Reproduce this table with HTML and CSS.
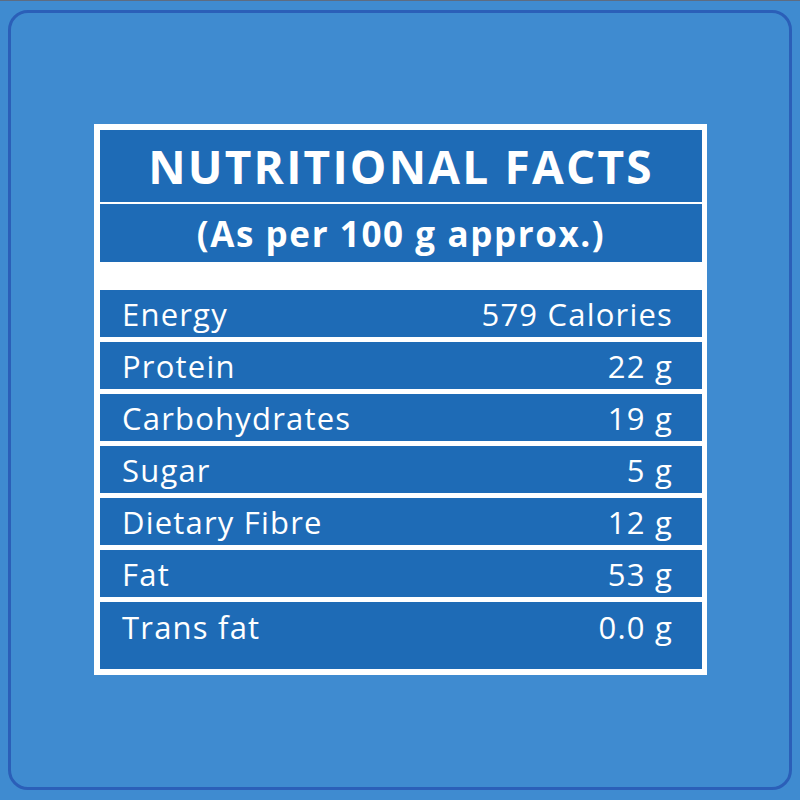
FILE: index.html
```html
<!DOCTYPE html>
<html>
<head>
<meta charset="utf-8">
<link rel="stylesheet" href="styles.css">
</head>
<body>
<div class="page">
  <div class="frame">
    <div class="label">
      <div class="head">
        <div class="title">NUTRITIONAL FACTS</div>
        <div class="subtitle">(As per 100 g approx.)</div>
      </div>
      <div class="rows">
        <div class="row"><span>Energy</span><span>579 Calories</span></div>
        <div class="row"><span>Protein</span><span>22 g</span></div>
        <div class="row"><span>Carbohydrates</span><span>19 g</span></div>
        <div class="row"><span>Sugar</span><span>5 g</span></div>
        <div class="row"><span>Dietary Fibre</span><span>12 g</span></div>
        <div class="row"><span>Fat</span><span>53 g</span></div>
        <div class="row last"><span>Trans fat</span><span>0.0 g</span></div>
      </div>
    </div>
  </div>
</div>
</body>
</html>
```

FILE: styles.css
```css
html, body {
  margin: 0;
  padding: 0;
}
body {
  width: 800px;
  height: 800px;
  font-family: "Open Sans", "Noto Sans", sans-serif;
}
.page {
  width: 800px;
  height: 800px;
  box-sizing: border-box;
  background: #3f8bd0;
  border-top: 1px solid #5d6c82;
  padding: 9px 8px 10px 8px;
}
.frame {
  height: 100%;
  box-sizing: border-box;
  border: 3px solid #2b5fb8;
  border-radius: 20px;
  padding-top: 111px;
  display: flex;
  flex-direction: column;
  align-items: center;
}
.label {
  background: #ffffff;
  width: 613px;
  box-sizing: border-box;
  padding: 6px 5px 6px 6px;
  margin-left: 1px;
  color: #ffffff;
}
.head {
  display: flex;
  flex-direction: column;
  gap: 2px;
}
.title {
  background: #1e6bb6;
  height: 72px;
  display: flex;
  align-items: center;
  justify-content: center;
  font-weight: 700;
  font-size: 46px;
  letter-spacing: 2.2px;
}
.subtitle {
  background: #1e6bb6;
  height: 58px;
  display: flex;
  align-items: center;
  justify-content: center;
  font-weight: 700;
  font-size: 35px;
  letter-spacing: 1.6px;
}
.rows {
  margin-top: 28px;
  display: flex;
  flex-direction: column;
  gap: 5px;
}
.row {
  background: #1e6bb6;
  height: 47px;
  display: flex;
  justify-content: space-between;
  align-items: center;
  padding: 0 29px 0 22px;
  font-size: 31px;
  font-weight: 500;
  letter-spacing: 1.2px;
}
.row.last {
  height: 67px;
  align-items: flex-start;
  padding-top: 4px;
  box-sizing: border-box;
}
```
